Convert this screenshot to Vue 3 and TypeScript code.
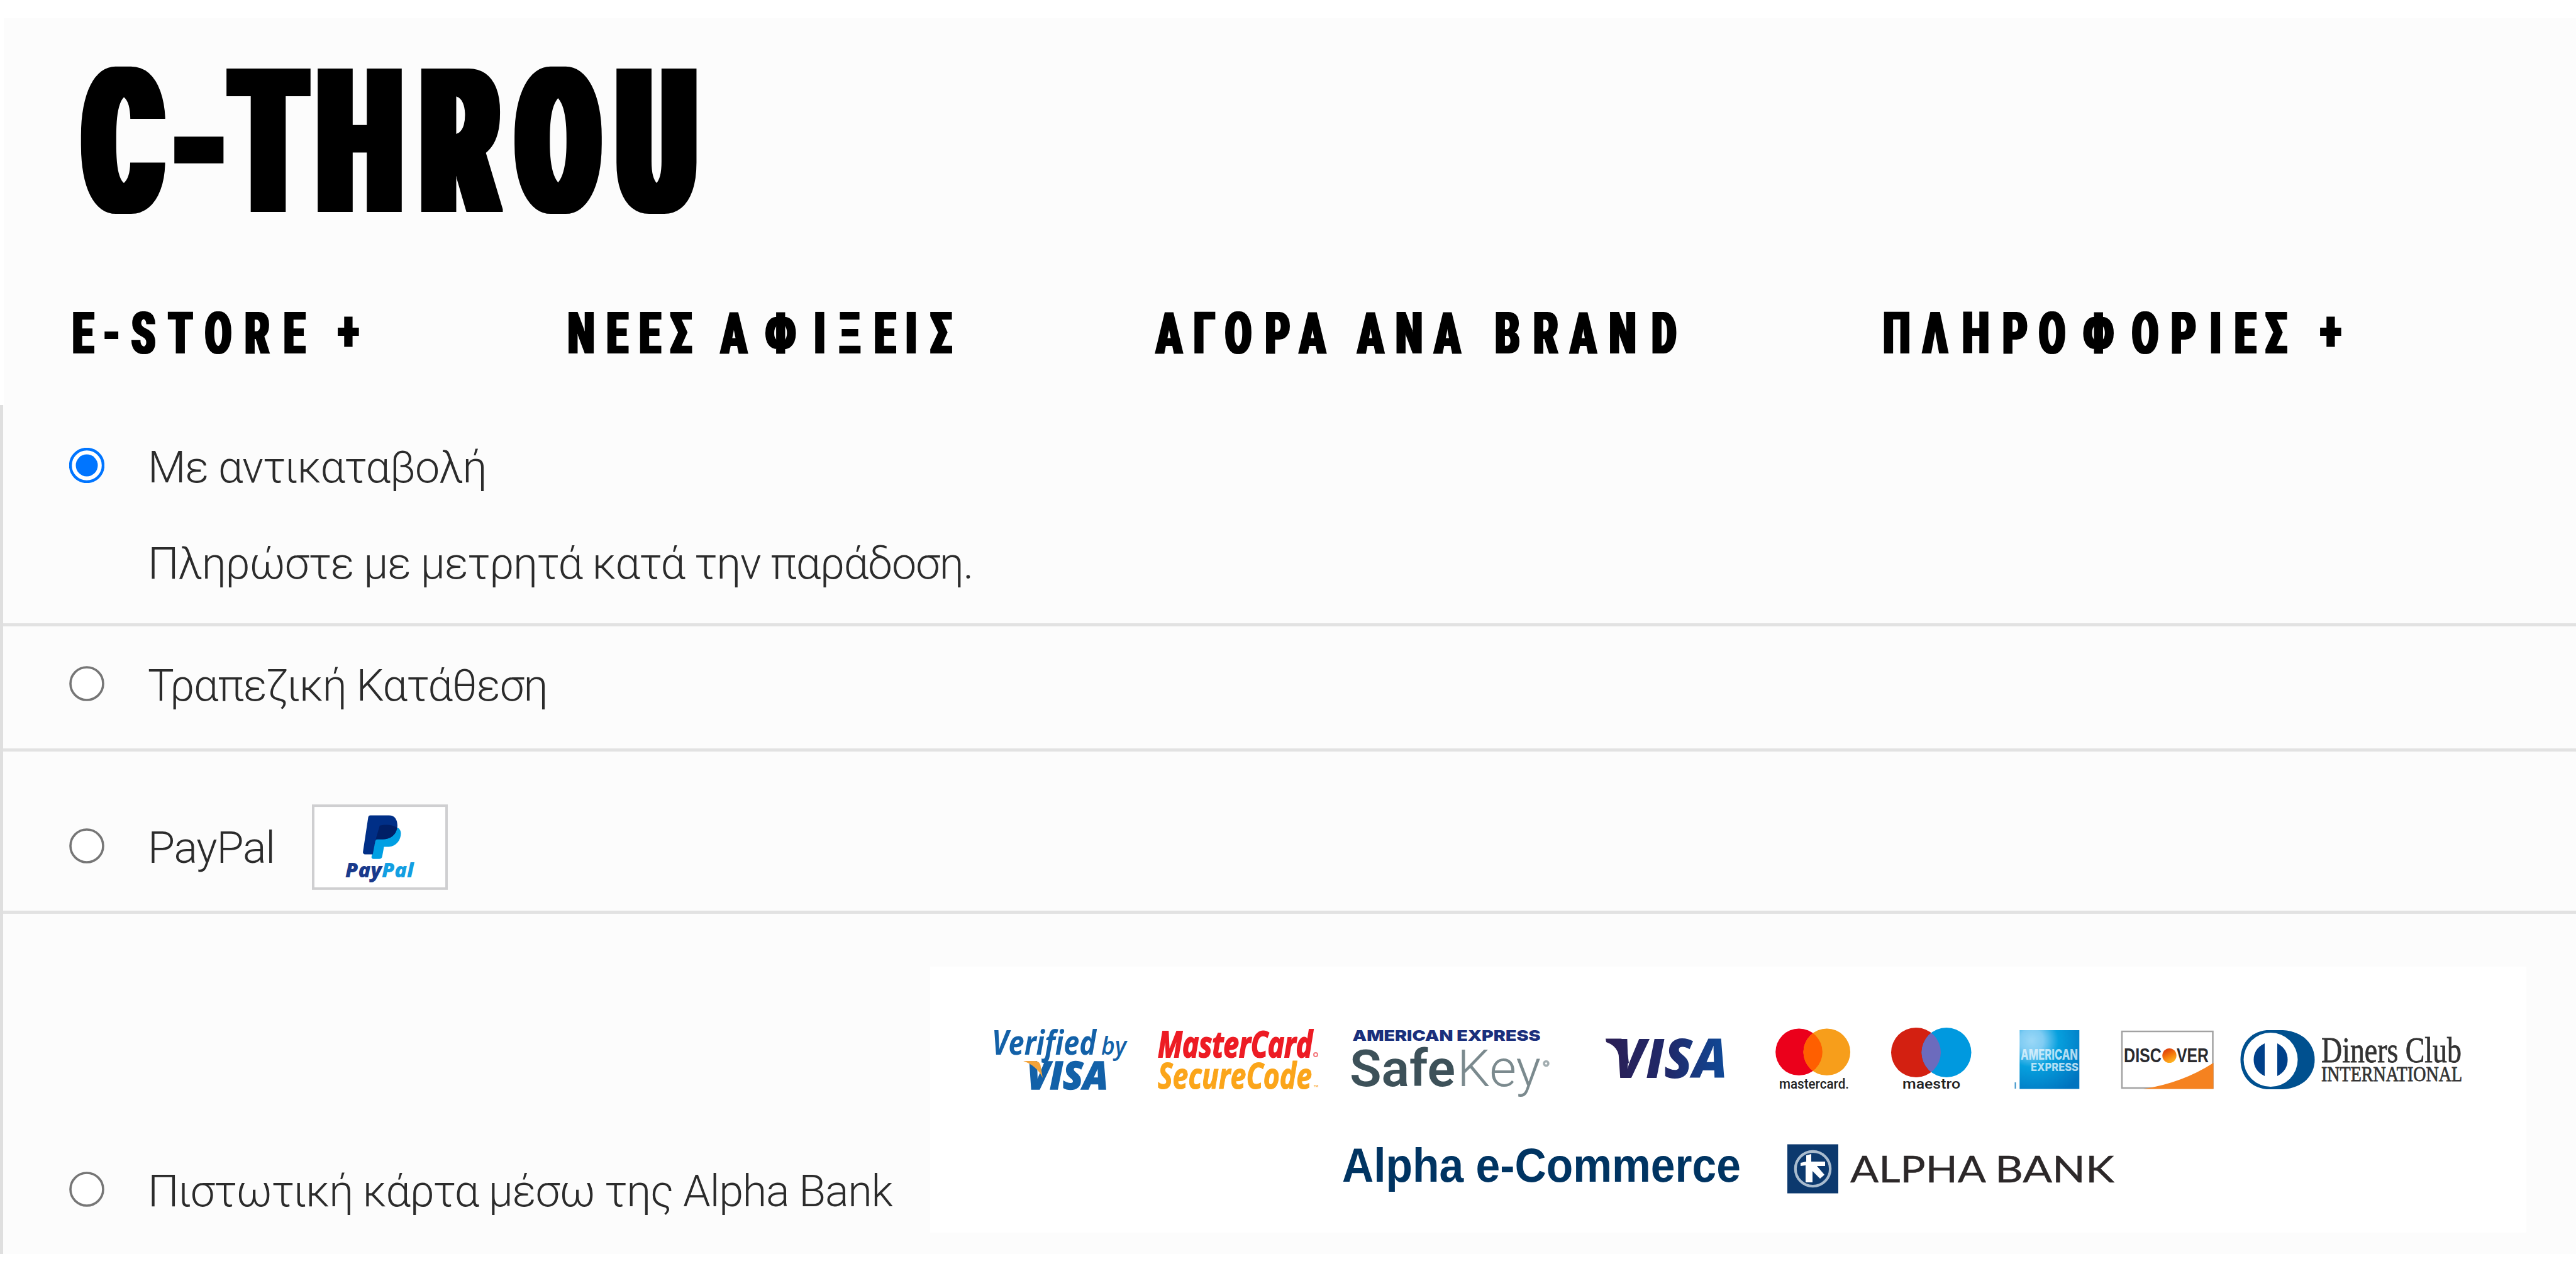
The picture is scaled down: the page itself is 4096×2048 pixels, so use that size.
<script setup lang="ts">
interface NavItem {
  label: string
  width: number
  centers: number[]
}

interface PaymentOption {
  id: string
  label: string
  note?: string
  checked: boolean
}

// Horizontal centre of every glyph, spaces included
const navItems: NavItem[] = [
  { label: 'E-STORE +', width: 460, centers: [16, 61.5, 112, 171, 231, 293, 352, 400, 438] },
  {
    label: 'ΝΕΕΣ ΑΦΙΞΕΙΣ',
    width: 610,
    centers: [20, 77.5, 129.5, 178.5, 220, 263, 337, 399.5, 447, 503, 545, 592],
  },
  {
    label: 'ΑΓΟΡΑ ΑΝΑ BRAND',
    width: 827,
    centers: [19, 75, 129, 191.5, 247, 290, 339.5, 400.5, 461.5, 510, 557, 618, 677.5, 740, 806],
  },
  {
    label: 'ΠΛΗΡΟΦΟΡΙΕΣ +',
    width: 732,
    centers: [21, 82, 146.5, 209, 268, 341.5, 416, 477, 528, 575, 624, 670, 711],
  },
]

const navScale = 0.66
const navX = (item: NavItem): string => item.centers.map((c) => (c / navScale).toFixed(1)).join(' ')
// The plus sign rides above the middle of the capitals
const navY = (item: NavItem): string => [...item.label].map((ch) => (ch === '+' ? 74 : 78)).join(' ')

const logoScale = 0.58
const logoX: string = [195, 317, 427, 572, 732, 887.5, 1044]
  .map((c) => ((c - 116) / logoScale).toFixed(1))
  .join(' ')

const options: PaymentOption[] = [
  { id: 'cod', label: 'Με αντικαταβολή', note: 'Πληρώστε με μετρητά κατά την παράδοση.', checked: true },
  { id: 'bank', label: 'Τραπεζική Κατάθεση', checked: false },
  { id: 'paypal', label: 'PayPal', checked: false },
  { id: 'card', label: 'Πιστωτική κάρτα μέσω της Alpha Bank', checked: false },
]
</script>

<template>
  <div class="page">
    <header class="header">
      <svg class="logo" width="1010" height="260" viewBox="0 0 1010 260">
        <defs>
          <filter id="fat-logo" x="-5%" y="-5%" width="110%" height="110%">
            <feMorphology operator="dilate" radius="12 1" />
          </filter>
        </defs>
        <g filter="url(#fat-logo)">
          <text class="heavy" :transform="`scale(${logoScale} 1)`" :x="logoX" y="243" font-size="318">C-THROU</text>
        </g>
      </svg>
      <nav class="nav">
        <svg
          v-for="item in navItems"
          :key="item.label"
          class="nav-item"
          :width="item.width"
          height="90"
          :viewBox="`0 0 ${item.width} 90`"
        >
          <defs>
            <filter id="fat-nav" x="-5%" y="-5%" width="110%" height="110%">
              <feMorphology operator="dilate" radius="2 0" />
            </filter>
          </defs>
          <g filter="url(#fat-nav)">
            <text class="heavy" :transform="`scale(${navScale} 1)`" :x="navX(item)" :y="navY(item)" font-size="92">{{ item.label }}</text>
          </g>
        </svg>
      </nav>
    </header>

    <main class="methods">
      <section v-for="opt in options" :key="opt.id" class="method" :class="`method--${opt.id}`">
        <div class="line">
          <svg class="radio" width="56" height="56" viewBox="0 0 56 56">
            <circle cx="28" cy="28" r="26" fill="#fff" :stroke="opt.checked ? '#0075ff' : '#767676'" :stroke-width="opt.checked ? 4.4 : 3.6" />
            <circle v-if="opt.checked" cx="28" cy="28" r="17.5" fill="#0075ff" />
          </svg>
          <span class="label">{{ opt.label }}</span>

          <svg v-if="opt.id === 'paypal'" class="paypal" width="216" height="136" viewBox="172 115 1090 685">
            <rect x="182" y="125" width="1070" height="665" fill="#fff" stroke="#cfcfd1" stroke-width="20" />
            <path d="M682 395 L650 535 Q648 552 666 552 H712 Q732 552 736 532 L750 455 H790 C850 450 886 400 886 345 Q884 315 862 302 L760 320 Z" fill="#009fe3" />
            <path d="M640 203 H790 C840 203 858 240 858 290 C850 360 800 395 740 395 H700 Q684 395 680 412 L660 515 H595 Q578 512 582 492 L624 215 Q627 203 640 203 Z" fill="#002f87" />
            <path d="M716 285 Q790 265 856 300 C848 362 800 395 740 395 H684 Z" fill="#001f66" />
            <text class="mark" x="440" y="700" font-size="158" textLength="548" lengthAdjust="spacingAndGlyphs" fill="#1a3a8c">Pay<tspan fill="#139fe2">Pal</tspan></text>
          </svg>

          <svg v-if="opt.id === 'card'" class="cards" width="2538" height="423" viewBox="1479 1537 2538 423">
            <defs>
              <linearGradient id="visa" gradientUnits="userSpaceOnUse" x1="2560" y1="0" x2="2745" y2="0">
                <stop offset="0" stop-color="#2a1f56" />
                <stop offset=".5" stop-color="#20296a" />
                <stop offset="1" stop-color="#0f4a98" />
              </linearGradient>
              <radialGradient id="amex" cx=".2" cy=".18" r="1">
                <stop offset="0" stop-color="#9bd8f7" />
                <stop offset=".2" stop-color="#7fccf3" />
                <stop offset=".45" stop-color="#06a0de" />
                <stop offset="1" stop-color="#0073bf" />
              </radialGradient>
              <linearGradient id="dot" x1="0" y1="0" x2=".5" y2="1">
                <stop offset="0" stop-color="#d42a0c" />
                <stop offset=".6" stop-color="#f57a0c" />
                <stop offset="1" stop-color="#fdb021" />
              </linearGradient>
              <clipPath id="mc-left"><circle cx="2860.5" cy="1672.8" r="37.3" /></clipPath>
              <clipPath id="ms-left"><circle cx="3046.5" cy="1673.5" r="39.5" /></clipPath>
            </defs>
            <rect x="1479" y="1537" width="2538" height="423" fill="#fff" />

            <!-- Verified by Visa -->
            <g fill="#1361a8" class="sans-italic">
              <text x="1577" y="1677.4" font-size="54" font-weight="700" textLength="166" lengthAdjust="spacingAndGlyphs">Verified</text>
              <text x="1751" y="1677" font-size="39" font-weight="600" textLength="40" lengthAdjust="spacingAndGlyphs">by</text>
              <text x="1633" y="1731.7" font-size="61.5" font-weight="800" textLength="129" lengthAdjust="spacingAndGlyphs" stroke="#1361a8" stroke-width="1.5">VISA</text>
            </g>
            <path d="M1627 1687 H1646 Q1654 1687 1655 1697 L1658 1714 Q1648 1694 1627 1687 Z" fill="#f2a33a" />

            <!-- MasterCard SecureCode -->
            <g class="sans-italic" font-weight="700">
              <text x="1841" y="1681" font-size="58" textLength="246" lengthAdjust="spacingAndGlyphs" fill="#ed1c24" stroke="#ed1c24" stroke-width="2">MasterCard</text>
              <text x="1841" y="1731" font-size="58" textLength="245" lengthAdjust="spacingAndGlyphs" fill="#fba51a" stroke="#fba51a" stroke-width="1.200">SecureCode</text>
              <circle cx="2092" cy="1677" r="3" fill="none" stroke="#f4797e" stroke-width="2" />
              <text x="2089" y="1732" font-size="10" fill="#fba51a">™</text>
            </g>

            <!-- American Express SafeKey -->
            <text x="2150.5" y="1654.9" class="inter" font-size="22.5" font-weight="900" textLength="299" lengthAdjust="spacingAndGlyphs" fill="#1a2f7c">AMERICAN EXPRESS</text>
            <text x="2146" y="1726.8" class="roboto" font-size="82" font-weight="600" textLength="168" lengthAdjust="spacingAndGlyphs" fill="#3d5159">Safe</text>
            <text x="2317" y="1726.8" class="roboto" font-size="82" font-weight="300" textLength="133" lengthAdjust="spacingAndGlyphs" fill="#7b8a8e">Key</text>
            <circle cx="2458.500" cy="1691" r="3.500" fill="none" stroke="#a3aeb1" stroke-width="3.500" />

            <!-- Visa -->
            <g fill="url(#visa)">
              <path d="M2553 1651.500 H2577 Q2585 1652 2586 1660 L2590 1690 L2581 1697 L2572 1672 Q2568 1662 2554 1657 Z" />
              <text x="2566" y="1713.500" class="sans-italic" font-size="87" font-weight="800" textLength="181" lengthAdjust="spacingAndGlyphs">VISA</text>
            </g>

            <!-- mastercard -->
            <circle cx="2860.5" cy="1672.8" r="37.300" fill="#eb001b" />
            <circle cx="2904.800" cy="1672.800" r="37.300" fill="#f79e1b" />
            <circle cx="2904.800" cy="1672.800" r="37.300" fill="#ff5f00" clip-path="url(#mc-left)" />
            <text x="2829" y="1731.300" class="roboto" font-size="22.500" font-weight="500" textLength="111" lengthAdjust="spacingAndGlyphs" fill="#222">mastercard.</text>

            <!-- maestro -->
            <circle cx="3046.500" cy="1673.500" r="39.500" fill="#d32011" />
            <circle cx="3095" cy="1673.500" r="39.500" fill="#0099df" />
            <circle cx="3095" cy="1673.500" r="39.500" fill="#6c6bbd" clip-path="url(#ms-left)" />
            <text x="3025" y="1731.300" class="roboto" font-size="22.500" font-weight="500" textLength="92" lengthAdjust="spacingAndGlyphs" fill="#222">maestro</text>

            <!-- American Express -->
            <rect x="3211.300" y="1638" width="95" height="93.500" fill="url(#amex)" />
            <rect x="3203.500" y="1721" width="2" height="10" fill="#3b93c9" />
            <g class="inter" font-weight="800" fill="#e9f7fe" fill-opacity=".75">
              <text x="3213" y="1684.500" font-size="22.500" textLength="91" lengthAdjust="spacingAndGlyphs">AMERICAN</text>
              <text x="3229" y="1702.500" font-size="17" textLength="76" lengthAdjust="spacingAndGlyphs">EXPRESS</text>
            </g>

            <!-- Discover -->
            <rect x="3374" y="1640" width="144.500" height="90" fill="#fff" stroke="#a2a2a2" stroke-width="2.500" />
            <path d="M3519.500 1690 V1731.500 H3408 Q3470 1722 3519.500 1690 Z" fill="#f58220" />
            <g class="arial" font-weight="700" fill="#2a2a2e">
              <text x="3377" y="1689.200" font-size="31" textLength="60" lengthAdjust="spacingAndGlyphs">DISC</text>
              <text x="3461" y="1689.200" font-size="31" textLength="51" lengthAdjust="spacingAndGlyphs">VER</text>
            </g>
            <ellipse cx="3449.500" cy="1678.500" rx="11.200" ry="11.500" fill="url(#dot)" />

            <!-- Diners Club -->
            <path d="M3604 1638 H3630 C3662 1640 3680.500 1660 3680.500 1685 S3662 1730 3630 1732 H3604 C3576 1729 3562.500 1708 3562.500 1685 S3576 1641 3604 1638 Z" fill="#00508f" />
            <circle cx="3610.500" cy="1685" r="43" fill="#fff" />
            <path d="M3601 1659 V1711 C3588 1705 3583.500 1695 3583.500 1685 S3588 1665 3601 1659 Z" fill="#00408a" />
            <path d="M3621 1659 V1711 C3633 1705 3637.500 1695 3637.500 1685 S3633 1665 3621 1659 Z" fill="#00408a" />
            <g class="serif" fill="#333" stroke="#333">
              <text x="3691" y="1688.500" font-size="57" textLength="223" lengthAdjust="spacingAndGlyphs" stroke-width=".8">Diners Club</text>
              <text x="3691" y="1718.500" font-size="34" textLength="224" lengthAdjust="spacingAndGlyphs" stroke-width=".8">INTERNATIONAL</text>
            </g>

            <!-- Alpha e-Commerce -->
            <text x="2134" y="1879" class="arial" font-size="76" font-weight="700" textLength="634" lengthAdjust="spacingAndGlyphs" fill="#003462">Alpha e-Commerce</text>

            <!-- Alpha Bank -->
            <rect x="2842" y="1819.500" width="81" height="78" fill="#0c396e" />
            <circle cx="2882.500" cy="1858.500" r="27.700" fill="none" stroke="#a9bccf" stroke-width="4.200" />
            <path d="M2863 1849 L2872 1847 V1837 L2880 1835 V1847 H2902 V1854 H2889 L2901 1868 L2894 1874 L2882 1862 V1880 H2871 V1853 L2863 1854 Z" fill="#fff" />
            <g class="lato" fill="#2c2829" stroke="#2c2829" stroke-width=".4">
              <text x="2942" y="1879.500" font-size="58.500" textLength="216" lengthAdjust="spacingAndGlyphs">ALPHA</text>
              <text x="3172" y="1879.500" font-size="58.500" textLength="190" lengthAdjust="spacingAndGlyphs">BANK</text>
            </g>
          </svg>
        </div>
        <p v-if="opt.note" class="note">{{ opt.note }}</p>
      </section>
    </main>
  </div>
</template>

<style>
body {
  margin: 0;
  background: #fff;
}
</style>

<style scoped>
.page {
  box-sizing: border-box;
  width: 4096px;
  height: 2048px;
  padding-top: 29px;
  overflow: hidden;
  background: #fff;
  font-family: Roboto, 'Noto Sans', sans-serif;
}

.header {
  box-sizing: border-box;
  height: 615px;
  margin-left: 6px;
  padding: 64px 0 0 110px;
  background: #fcfcfc;
}

.logo {
  display: block;
  overflow: visible;
}

.heavy {
  font-family: Roboto, 'Open Sans', sans-serif;
  font-weight: 900;
  text-anchor: middle;
  fill: #000;
}

.nav {
  display: flex;
  gap: 328px;
  margin-top: 131px;
}

.nav-item {
  flex: none;
  overflow: visible;
}

.nav-item:nth-child(2) {
  margin-right: -2px;
}

.methods {
  box-sizing: border-box;
  height: 1350px;
  border-left: 5px solid #dfdfdf;
  background: #fcfcfc;
}

.method {
  box-sizing: border-box;
  padding-left: 105px;
  border-bottom: 5px solid #e2e2e2;
}

.method--cod {
  height: 352px;
  padding-top: 59px;
}

.method--bank {
  height: 199px;
  padding-top: 54px;
}

.method--paypal {
  height: 258px;
  padding-top: 84px;
}

.method--card {
  height: 540px;
  padding-top: 84px;
  border-bottom: 0;
}

.line {
  display: flex;
  align-items: flex-start;
}

.radio {
  flex: none;
  margin: 9px 69px 0 0;
}

.label,
.note {
  color: #2b2b2b;
  font-size: 70px;
  font-weight: 300;
  letter-spacing: -1.2px;
  line-height: 80px;
  white-space: nowrap;
}

.note {
  margin: 73px 0 0 125px;
}

.method--paypal .radio {
  margin-top: 38px;
}

.method--paypal .label {
  width: 261px;
  margin-top: 29px;
}

.method--card .radio {
  margin-top: 326px;
}

.method--card .label {
  width: 1244px;
  margin-top: 317px;
}

.paypal,
.cards {
  flex: none;
}

.mark {
  font-family: 'Open Sans', sans-serif;
  font-style: italic;
  font-weight: 800;
}

.sans-italic {
  font-family: 'Open Sans', sans-serif;
  font-style: italic;
}

.inter {
  font-family: Inter, sans-serif;
}

.arial {
  font-family: 'Liberation Sans', sans-serif;
}

.roboto {
  font-family: Roboto, sans-serif;
}

.serif {
  font-family: 'Liberation Serif', serif;
}

.lato {
  font-family: Lato, sans-serif;
}
</style>
